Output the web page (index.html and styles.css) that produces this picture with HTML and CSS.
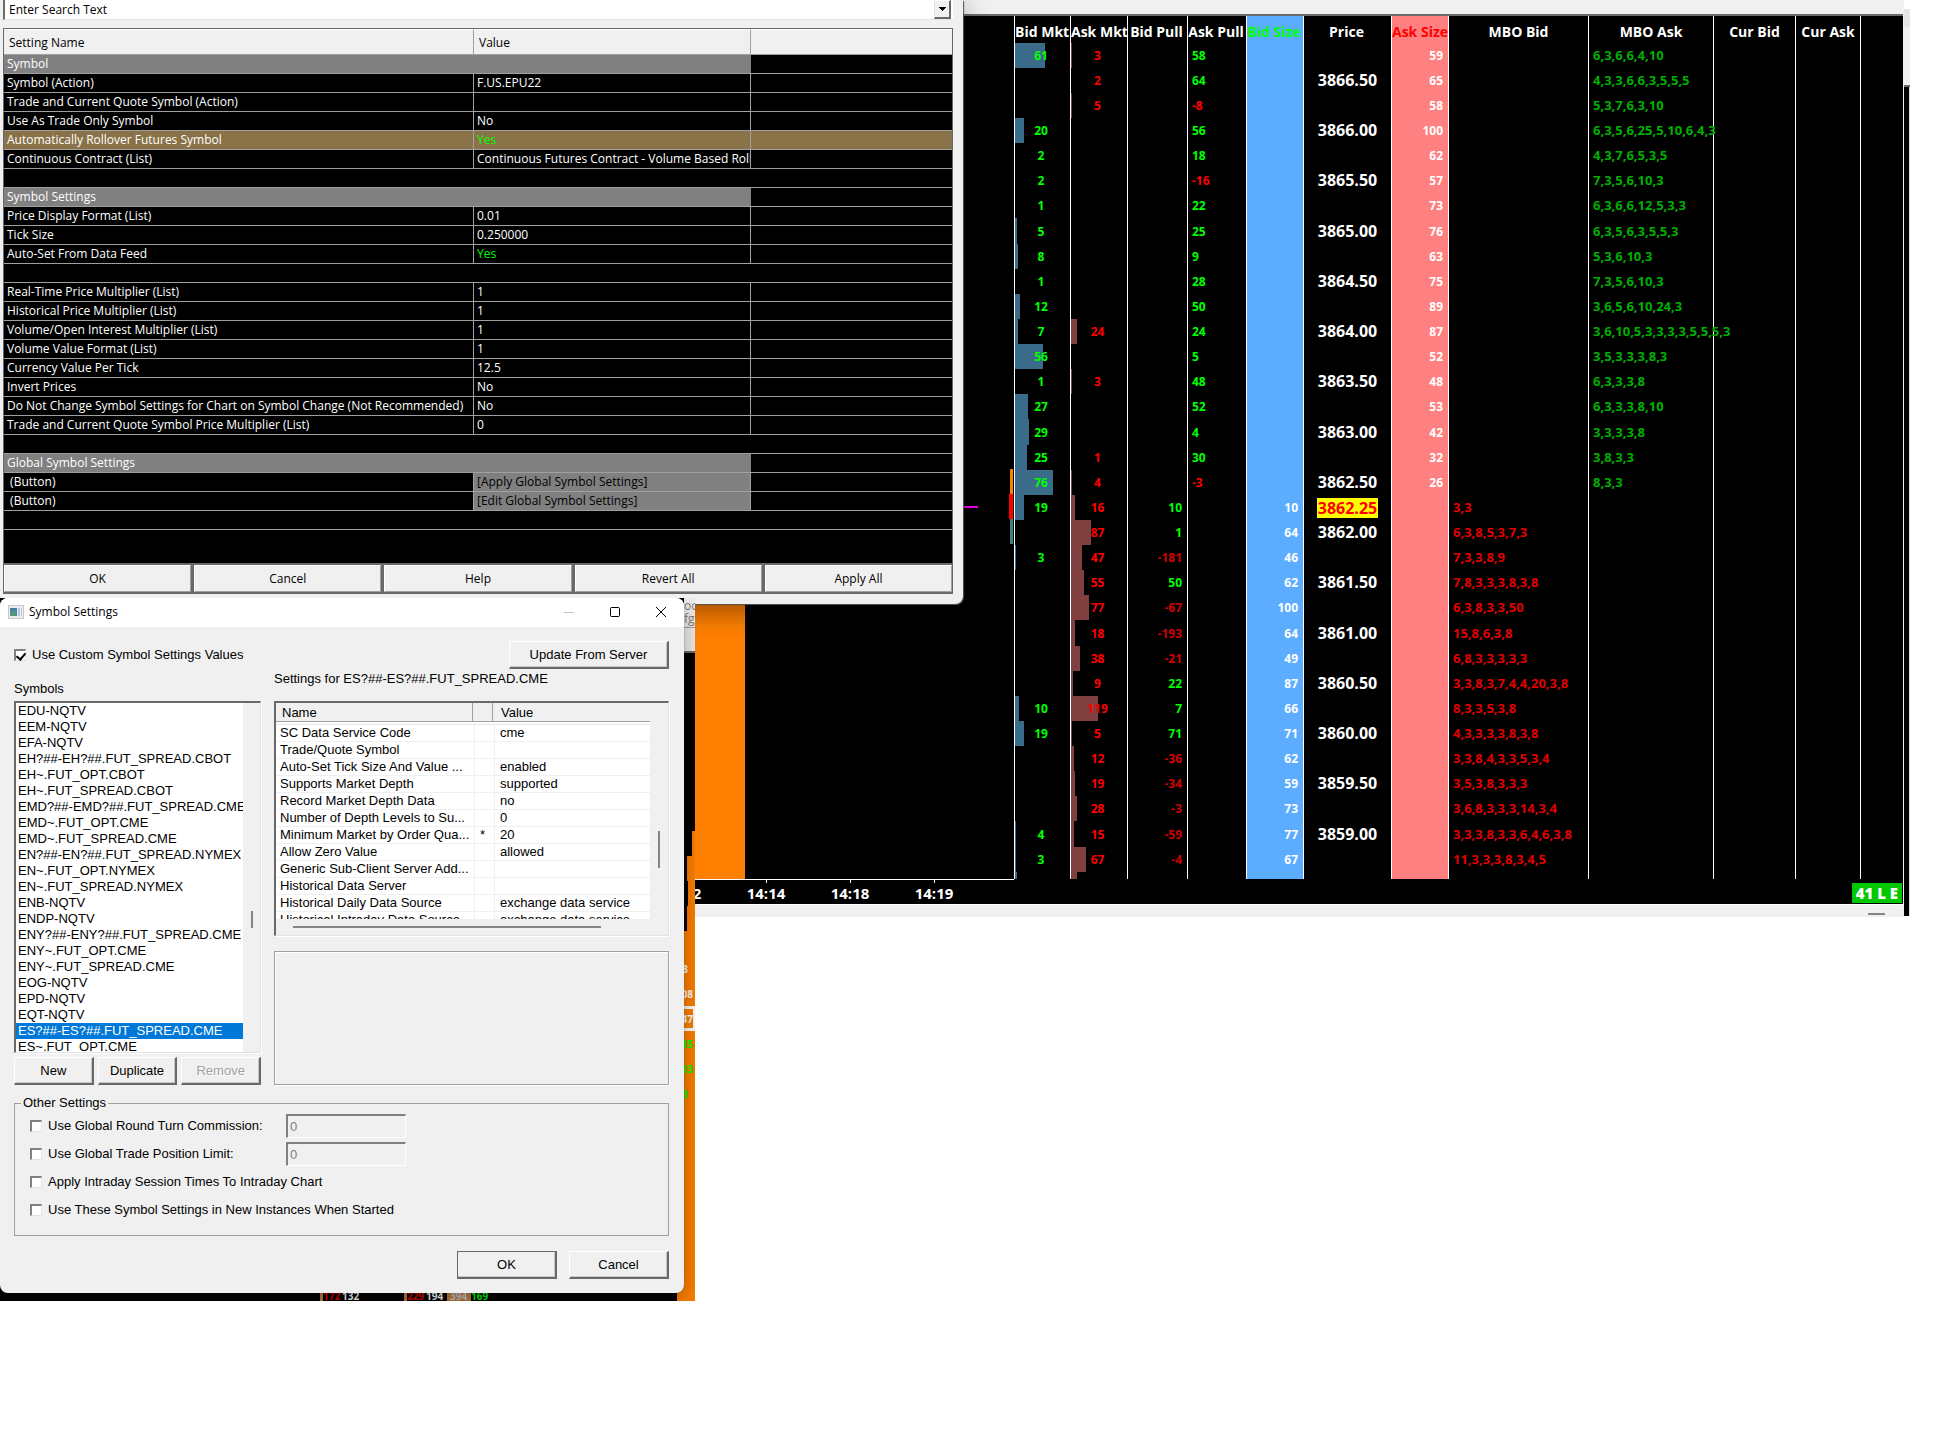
FILE: index.html
```html
<!DOCTYPE html>
<html lang="en">
<head>
<meta charset="utf-8">
<title>Symbol Settings</title>
<link rel="stylesheet" href="styles.css">
</head>
<body>
<main class="desktop">

<section class="chart-window" aria-label="Depth ladder">
  <div class="chart-top"></div>
  <div class="chart-body">
    <div class="plot">
      <div class="session-band"></div>
      <i class="mark last-price"></i>
      <i class="mark tick-up"></i>
      <i class="mark tick-now"></i>
      <i class="mark tick-down"></i>
    </div>
    <div class="ladder-pane">
    <table class="ladder">
      <colgroup><col class="c56"><col class="c57"><col class="c60"><col class="c59"><col class="c57"><col class="c88"><col class="c57"><col class="c140"><col class="c125"><col class="c82"><col class="c65"><col></colgroup>
      <thead><tr><th>Bid Mkt</th><th>Ask Mkt</th><th>Bid Pull</th><th>Ask Pull</th><th>Bid Size</th><th>Price</th><th>Ask Size</th><th>MBO Bid</th><th>MBO Ask</th><th>Cur Bid</th><th>Cur Ask</th><th></th></tr></thead>
      <tbody>
      <tr><td style="--bar:30px">61</td><td style="--bar:1px">3</td><td></td><td>58</td><td></td><td></td><td>59</td><td></td><td>6,3,6,6,4,10</td><td></td><td></td><td></td></tr>
      <tr><td></td><td>2</td><td></td><td>64</td><td></td><td>3866.50</td><td>65</td><td></td><td>4,3,3,6,6,3,5,5,5</td><td></td><td></td><td></td></tr>
      <tr><td></td><td style="--bar:1px">5</td><td></td><td class="neg">-8</td><td></td><td></td><td>58</td><td></td><td>5,3,7,6,3,10</td><td></td><td></td><td></td></tr>
      <tr><td style="--bar:9px">20</td><td></td><td></td><td>56</td><td></td><td>3866.00</td><td>100</td><td></td><td>6,3,5,6,25,5,10,6,4,3</td><td></td><td></td><td></td></tr>
      <tr><td>2</td><td></td><td></td><td>18</td><td></td><td></td><td>62</td><td></td><td>4,3,7,6,5,3,5</td><td></td><td></td><td></td></tr>
      <tr><td>2</td><td></td><td></td><td class="neg">-16</td><td></td><td>3865.50</td><td>57</td><td></td><td>7,3,5,6,10,3</td><td></td><td></td><td></td></tr>
      <tr><td>1</td><td></td><td></td><td>22</td><td></td><td></td><td>73</td><td></td><td>6,3,6,6,12,5,3,3</td><td></td><td></td><td></td></tr>
      <tr><td style="--bar:2px">5</td><td></td><td></td><td>25</td><td></td><td>3865.00</td><td>76</td><td></td><td>6,3,5,6,3,5,5,3</td><td></td><td></td><td></td></tr>
      <tr><td style="--bar:3px">8</td><td></td><td></td><td>9</td><td></td><td></td><td>63</td><td></td><td>5,3,6,10,3</td><td></td><td></td><td></td></tr>
      <tr><td>1</td><td></td><td></td><td>28</td><td></td><td>3864.50</td><td>75</td><td></td><td>7,3,5,6,10,3</td><td></td><td></td><td></td></tr>
      <tr><td style="--bar:5px">12</td><td></td><td></td><td>50</td><td></td><td></td><td>89</td><td></td><td>3,6,5,6,10,24,3</td><td></td><td></td><td></td></tr>
      <tr><td style="--bar:3px">7</td><td style="--bar:6px">24</td><td></td><td>24</td><td></td><td>3864.00</td><td>87</td><td></td><td>3,6,10,5,3,3,3,3,5,5,5,3</td><td></td><td></td><td></td></tr>
      <tr><td style="--bar:28px">56</td><td></td><td></td><td>5</td><td></td><td></td><td>52</td><td></td><td>3,5,3,3,3,8,3</td><td></td><td></td><td></td></tr>
      <tr><td>1</td><td style="--bar:1px">3</td><td></td><td>48</td><td></td><td>3863.50</td><td>48</td><td></td><td>6,3,3,3,8</td><td></td><td></td><td></td></tr>
      <tr><td style="--bar:13px">27</td><td></td><td></td><td>52</td><td></td><td></td><td>53</td><td></td><td>6,3,3,3,8,10</td><td></td><td></td><td></td></tr>
      <tr><td style="--bar:14px">29</td><td></td><td></td><td>4</td><td></td><td>3863.00</td><td>42</td><td></td><td>3,3,3,3,8</td><td></td><td></td><td></td></tr>
      <tr><td style="--bar:12px">25</td><td>1</td><td></td><td>30</td><td></td><td></td><td>32</td><td></td><td>3,8,3,3</td><td></td><td></td><td></td></tr>
      <tr><td style="--bar:38px">76</td><td style="--bar:1px">4</td><td></td><td class="neg">-3</td><td></td><td>3862.50</td><td>26</td><td></td><td>8,3,3</td><td></td><td></td><td></td></tr>
      <tr><td style="--bar:9px">19</td><td style="--bar:4px">16</td><td>10</td><td></td><td>10</td><td><mark>3862.25</mark></td><td></td><td>3,3</td><td></td><td></td><td></td><td></td></tr>
      <tr><td></td><td style="--bar:20px">87</td><td>1</td><td></td><td>64</td><td>3862.00</td><td></td><td>6,3,8,5,3,7,3</td><td></td><td></td><td></td><td></td></tr>
      <tr><td style="--bar:1px">3</td><td style="--bar:11px">47</td><td class="neg">-181</td><td></td><td>46</td><td></td><td></td><td>7,3,3,8,9</td><td></td><td></td><td></td><td></td></tr>
      <tr><td></td><td style="--bar:13px">55</td><td>50</td><td></td><td>62</td><td>3861.50</td><td></td><td>7,8,3,3,3,8,3,8</td><td></td><td></td><td></td><td></td></tr>
      <tr><td></td><td style="--bar:18px">77</td><td class="neg">-67</td><td></td><td>100</td><td></td><td></td><td>6,3,8,3,3,50</td><td></td><td></td><td></td><td></td></tr>
      <tr><td></td><td style="--bar:4px">18</td><td class="neg">-193</td><td></td><td>64</td><td>3861.00</td><td></td><td>15,8,6,3,8</td><td></td><td></td><td></td><td></td></tr>
      <tr><td></td><td style="--bar:9px">38</td><td class="neg">-21</td><td></td><td>49</td><td></td><td></td><td>6,8,3,3,3,3,3</td><td></td><td></td><td></td><td></td></tr>
      <tr><td></td><td style="--bar:2px">9</td><td>22</td><td></td><td>87</td><td>3860.50</td><td></td><td>3,3,8,3,7,4,4,20,3,8</td><td></td><td></td><td></td><td></td></tr>
      <tr><td style="--bar:4px">10</td><td style="--bar:27px">119</td><td>7</td><td></td><td>66</td><td></td><td></td><td>8,3,3,5,3,8</td><td></td><td></td><td></td><td></td></tr>
      <tr><td style="--bar:9px">19</td><td style="--bar:1px">5</td><td>71</td><td></td><td>71</td><td>3860.00</td><td></td><td>4,3,3,3,3,8,3,8</td><td></td><td></td><td></td><td></td></tr>
      <tr><td></td><td style="--bar:3px">12</td><td class="neg">-36</td><td></td><td>62</td><td></td><td></td><td>3,3,8,4,3,3,5,3,4</td><td></td><td></td><td></td><td></td></tr>
      <tr><td></td><td style="--bar:4px">19</td><td class="neg">-34</td><td></td><td>59</td><td>3859.50</td><td></td><td>3,5,3,8,3,3,3</td><td></td><td></td><td></td><td></td></tr>
      <tr><td></td><td style="--bar:6px">28</td><td class="neg">-3</td><td></td><td>73</td><td></td><td></td><td>3,6,8,3,3,3,14,3,4</td><td></td><td></td><td></td><td></td></tr>
      <tr><td style="--bar:1px">4</td><td style="--bar:3px">15</td><td class="neg">-59</td><td></td><td>77</td><td>3859.00</td><td></td><td>3,3,3,8,3,3,6,4,6,3,8</td><td></td><td></td><td></td><td></td></tr>
      <tr><td style="--bar:1px">3</td><td style="--bar:15px">67</td><td class="neg">-4</td><td></td><td>67</td><td></td><td></td><td>11,3,3,3,8,3,4,5</td><td></td><td></td><td></td><td></td></tr>
      <tr class="cut"><td style="--bar:2px"></td><td style="--bar:6px"></td><td></td><td></td><td></td><td></td><td></td><td></td><td></td><td></td><td></td><td></td></tr>
      </tbody>
    </table>
    </div>
  </div>
  <div class="time-axis">
    <span class="time first">14:12</span><span class="time">14:14</span><span class="time">14:18</span><span class="time">14:19</span>
    <strong class="position">41 L E</strong>
  </div>
  <div class="chart-scroll"><i></i></div>
</section>
<div class="chart-edge"><i class="edge-tab"></i><i class="edge-bar"></i><i class="edge-plot"></i></div>

<section class="dialog settings-dialog" aria-label="Chart settings">
  <div class="search">
    <input type="text" value="Enter Search Text" aria-label="Search">
    <button type="button" aria-label="Show search history"><svg width="7" height="4" viewBox="0 0 7 4"><path d="M0 0h7v1h-1v1h-1v1h-1v1h-1v-1h-1v-1h-1v-1h-1z"/></svg></button>
  </div>
  <div class="grid-frame">
    <table class="settings">
      <colgroup><col class="c470"><col class="c277"><col></colgroup>
      <thead><tr><th>Setting Name</th><th>Value</th><th></th></tr></thead>
      <tbody>
      <tr class="group"><td colspan="2">Symbol</td><td></td></tr>
      <tr><td>Symbol (Action)</td><td>F.US.EPU22</td><td></td></tr>
      <tr><td>Trade and Current Quote Symbol (Action)</td><td></td><td></td></tr>
      <tr><td>Use As Trade Only Symbol</td><td>No</td><td></td></tr>
      <tr class="current"><td>Automatically Rollover Futures Symbol</td><td class="yes">Yes</td><td></td></tr>
      <tr><td>Continuous Contract (List)</td><td>Continuous Futures Contract - Volume Based Rollover</td><td></td></tr>
      <tr><td colspan="3"></td></tr>
      <tr class="group"><td colspan="2">Symbol Settings</td><td></td></tr>
      <tr><td>Price Display Format (List)</td><td>0.01</td><td></td></tr>
      <tr><td>Tick Size</td><td>0.250000</td><td></td></tr>
      <tr><td>Auto-Set From Data Feed</td><td class="yes">Yes</td><td></td></tr>
      <tr><td colspan="3"></td></tr>
      <tr><td>Real-Time Price Multiplier (List)</td><td>1</td><td></td></tr>
      <tr><td>Historical Price Multiplier (List)</td><td>1</td><td></td></tr>
      <tr><td>Volume/Open Interest Multiplier (List)</td><td>1</td><td></td></tr>
      <tr><td>Volume Value Format (List)</td><td>1</td><td></td></tr>
      <tr><td>Currency Value Per Tick</td><td>12.5</td><td></td></tr>
      <tr><td>Invert Prices</td><td>No</td><td></td></tr>
      <tr><td>Do Not Change Symbol Settings for Chart on Symbol Change (Not Recommended)</td><td>No</td><td></td></tr>
      <tr><td>Trade and Current Quote Symbol Price Multiplier (List)</td><td>0</td><td></td></tr>
      <tr><td colspan="3"></td></tr>
      <tr class="group"><td colspan="2">Global Symbol Settings</td><td></td></tr>
      <tr><td>&nbsp;(Button)</td><td class="action"><button type="button">[Apply Global Symbol Settings]</button></td><td></td></tr>
      <tr><td>&nbsp;(Button)</td><td class="action"><button type="button">[Edit Global Symbol Settings]</button></td><td></td></tr>
      <tr><td colspan="3"></td></tr>
      </tbody>
    </table>
  </div>
  <div class="button-bar">
    <button type="button">OK</button><button type="button">Cancel</button><button type="button">Help</button><button type="button">Revert All</button><button type="button">Apply All</button>
  </div>
</section>

<div class="lower-area">
  <svg class="profile" width="18" height="703" viewBox="0 0 18 703"><path fill="#ff8000" d="M15 233h3v470H0V333h10v-25h1v-25h-1v-25h5z"/><path fill="#fff" d="M0 408h18v25H0z"/><path fill="#ff8000" d="M0 411h16v19H0z"/></svg>
  <div class="back-title"><span>oc</span><span>fg</span></div>
  <div class="volumes"><span>28</span><span>308</span><span>347</span><span class="up">345</span><span class="up">233</span><span class="up">28</span></div>
  <div class="prints"><span class="sell">172</span><span>132</span><span class="sell second">229</span><span>194</span><span class="peak">394</span><span class="buy">169</span></div>

  <section class="dialog symbol-dialog" aria-labelledby="symbol-title">
    <header class="title-bar">
      <svg class="app-icon" width="16" height="14" viewBox="0 0 16 14"><path fill="#c3c9cf" d="M0 0h16v14H0z"/><path fill="#eef1f4" d="M1 1h14v12H1z"/><path fill="#4b7fa5" d="M2 3h7v8H2z"/><path fill="#4f9a80" d="M4 6h4v5H2V8z"/><path fill="#b9c7d5" d="M10 3h2v8h-2zM13 3h1v8h-1z"/></svg>
      <h1 id="symbol-title">Symbol Settings</h1>
      <div class="window-buttons">
        <button type="button" aria-label="Minimize" disabled><svg width="10" height="10" viewBox="0 0 10 10"><path d="M0 5.5h10" stroke="#c4c4c4"/></svg></button>
        <button type="button" aria-label="Maximize"><svg width="10" height="10" viewBox="0 0 10 10"><rect x=".5" y=".5" width="9" height="9" rx="1" fill="none" stroke="#000"/></svg></button>
        <button type="button" aria-label="Close"><svg width="10" height="10" viewBox="0 0 10 10"><path d="M0 0l10 10M10 0L0 10" stroke="#000"/></svg></button>
      </div>
    </header>
    <div class="dialog-body">
      <div class="panes">
        <div class="left-pane">
          <label class="tick"><input type="checkbox" checked>Use Custom Symbol Settings Values</label>
          <label class="caption" for="symbols">Symbols</label>
          <div class="list-box">
            <select id="symbols" size="22">
              <option>EDU-NQTV</option><option>EEM-NQTV</option><option>EFA-NQTV</option>
              <option>EH?##-EH?##.FUT_SPREAD.CBOT</option><option>EH~.FUT_OPT.CBOT</option><option>EH~.FUT_SPREAD.CBOT</option>
              <option>EMD?##-EMD?##.FUT_SPREAD.CME</option><option>EMD~.FUT_OPT.CME</option><option>EMD~.FUT_SPREAD.CME</option>
              <option>EN?##-EN?##.FUT_SPREAD.NYMEX</option><option>EN~.FUT_OPT.NYMEX</option><option>EN~.FUT_SPREAD.NYMEX</option>
              <option>ENB-NQTV</option><option>ENDP-NQTV</option><option>ENY?##-ENY?##.FUT_SPREAD.CME</option>
              <option>ENY~.FUT_OPT.CME</option><option>ENY~.FUT_SPREAD.CME</option><option>EOG-NQTV</option>
              <option>EPD-NQTV</option><option>EQT-NQTV</option><option selected>ES?##-ES?##.FUT_SPREAD.CME</option><option>ES~.FUT_OPT.CME</option>
            </select>
            <div class="v-track"><i class="list-thumb"></i></div>
          </div>
          <div class="list-buttons">
            <button type="button" class="push">New</button><button type="button" class="push">Duplicate</button><button type="button" class="push" disabled>Remove</button>
          </div>
        </div>
        <div class="right-pane">
          <button type="button" class="push update">Update From Server</button>
          <p class="caption">Settings for ES?##-ES?##.FUT_SPREAD.CME</p>
          <div class="table-box">
            <div class="table-view">
              <table class="values">
                <colgroup><col class="c199"><col class="c20"><col></colgroup>
                <thead><tr><th>Name</th><th></th><th>Value</th></tr></thead>
                <tbody>
                <tr><td>SC Data Service Code</td><td></td><td>cme</td></tr>
                <tr><td>Trade/Quote Symbol</td><td></td><td></td></tr>
                <tr><td>Auto-Set Tick Size And Value ...</td><td></td><td>enabled</td></tr>
                <tr><td>Supports Market Depth</td><td></td><td>supported</td></tr>
                <tr><td>Record Market Depth Data</td><td></td><td>no</td></tr>
                <tr><td>Number of Depth Levels to Su...</td><td></td><td>0</td></tr>
                <tr><td>Minimum Market by Order Qua...</td><td>*</td><td>20</td></tr>
                <tr><td>Allow Zero Value</td><td></td><td>allowed</td></tr>
                <tr><td>Generic Sub-Client Server Add...</td><td></td><td></td></tr>
                <tr><td>Historical Data Server</td><td></td><td></td></tr>
                <tr><td>Historical Daily Data Source</td><td></td><td>exchange data service</td></tr>
                <tr><td>Historical Intraday Data Source</td><td></td><td>exchange data service</td></tr>
                </tbody>
              </table>
            </div>
            <div class="v-track"><i class="table-thumb"></i></div>
            <div class="h-track"><i></i></div>
          </div>
          <div class="notes"></div>
        </div>
      </div>
      <fieldset>
        <legend>Other Settings</legend>
        <div class="option"><label class="tick"><input type="checkbox">Use Global Round Turn Commission:</label><input type="text" value="0" disabled aria-label="Round turn commission"></div>
        <div class="option"><label class="tick"><input type="checkbox">Use Global Trade Position Limit:</label><input type="text" value="0" disabled aria-label="Trade position limit"></div>
        <div class="option"><label class="tick"><input type="checkbox">Apply Intraday Session Times To Intraday Chart</label></div>
        <div class="option"><label class="tick"><input type="checkbox">Use These Symbol Settings in New Instances When Started</label></div>
      </fieldset>
      <footer><button type="button" class="push default">OK</button><button type="button" class="push">Cancel</button></footer>
    </div>
  </section>
</div>

</main>
</body>
</html>
```

FILE: styles.css
```css
* { box-sizing: border-box; }
body { margin: 0; background: #fff; color: #000; font-family: "Open Sans", "Noto Sans", sans-serif; font-size: 12px; }
button, input, select { font: inherit; color: inherit; margin: 0; border-radius: 0; }
button { padding: 0; }
table { border-collapse: separate; border-spacing: 0; table-layout: fixed; width: 100%; }
th, td { padding: 0; white-space: nowrap; }
.desktop { position: relative; min-height: 100vh; overflow: hidden; }
.dialog { background: #f0f0f0; }

/* ---- chart with the depth ladder ---- */
.chart-window { position: absolute; top: 0; left: 695px; right: 38px; background: #000; border-right: 1px solid #f0f0f0; color: #fff; font-weight: 700; }
.chart-top { height: 16px; background: #f0f0f0; border-bottom: 2px solid #696969; }
.chart-body { display: flex; }
.plot { position: relative; width: 319px; flex: none; border-bottom: 1px solid #fff; }
.session-band { width: 50px; height: 100%; background: #ff8000; }
.mark { position: absolute; right: 1px; width: 3px; height: 25px; }
.mark.last-price { right: 36px; top: 490px; width: 20px; height: 2px; background: #f0f; }
.mark.tick-up { top: 453px; background: #ff8000; }
.mark.tick-now { top: 478px; width: 4px; background: #f00; }
.mark.tick-down { top: 503px; background: #408080; }
.ladder-pane { flex: 1; min-width: 0; padding-bottom: 1px; }
.c56 { width: 56px; } .c57 { width: 57px; } .c60 { width: 60px; } .c59 { width: 59px; }
.c88 { width: 88px; } .c140 { width: 140px; } .c125 { width: 125px; } .c82 { width: 82px; } .c65 { width: 65px; }
.ladder th { height: 27px; padding-top: 4px; line-height: 20px; font-size: 14px; text-align: center; border-left: 1px solid #fff; }
.ladder th:nth-child(-n + 7) { padding-right: 2px; }
.ladder td { height: 25px; line-height: 25px; font-size: 12px; border-left: 1px solid #fff; }
.ladder tbody tr:nth-child(8n + 8) td { height: 26px; }
.ladder tbody tr.cut td { height: 7px; line-height: 7px; }
.ladder td:nth-child(-n + 2) { text-align: center; color: #0f0; background: linear-gradient(#3a6c89, #3a6c89) 0 0 / var(--bar, 0) 100% no-repeat; padding-right: 3px; }
.ladder td:nth-child(2) { color: #f00; background-image: linear-gradient(#804040, #804040); }
.ladder td:nth-child(3) { text-align: right; padding-right: 5px; color: #0f0; }
.ladder td:nth-child(3).neg { color: #d00000; }
.ladder td:nth-child(4) { padding-left: 4px; color: #0f0; }
.ladder td:nth-child(4).neg { color: #f00; }
.ladder td:nth-child(5), .ladder th:nth-child(5) { background: #5cadff; }
.ladder th:nth-child(5) { color: #0f0; }
.ladder td:nth-child(5), .ladder td:nth-child(7) { text-align: right; padding-right: 5px; }
.ladder td:nth-child(6) { text-align: center; font-size: 16px; }
.ladder td:nth-child(7), .ladder th:nth-child(7) { background: #ff8080; }
.ladder th:nth-child(7) { color: #f00; }
.ladder td:nth-child(8) { padding-left: 4px; font-size: 13px; color: #e00000; }
.ladder td:nth-child(9) { padding-left: 4px; font-size: 13px; color: #00b000; }
.ladder mark { display: block; width: max-content; margin: 0 auto; line-height: 20px; padding: 0 1px; background: #ff0; color: #f00; }
.time-axis { display: flex; height: 24px; overflow: hidden; font-size: 15px; line-height: 20px; }
.time { width: 84px; text-align: center; padding-top: 3px; background: linear-gradient(#fff, #fff) 50% 0 / 1px 3px no-repeat; }
.time.first { margin-left: -55px; }
.position { height: 20px; margin: 3px 1px 0 auto; padding: 0 4px; background: #00c800; }
.chart-scroll { height: 13px; background: #f0f0f0; border-top: 1px solid #fff; padding: 8px 18px 0 0; }
.chart-scroll i { display: block; width: 17px; height: 2px; margin-left: auto; background: #858585; }
.chart-edge { position: absolute; top: 9px; right: 32px; width: 6px; height: 907px; display: flex; flex-direction: column; }
.edge-tab { height: 18px; background: #e5e5e5; }
.edge-bar { height: 60px; background: #f0f0f0; border-bottom: 2px solid #696969; }
.edge-plot { flex: 1; background: #000; border-right: 1px solid #ddd; }

/* ---- chart settings dialog ---- */
.settings-dialog { position: absolute; top: 0; left: 0; width: 963px; padding: 0 10px 10px 3px; border-radius: 0 0 8px 8px; box-shadow: 1px 1px 1px #555, 0 8px 28px rgba(0, 0, 0, .4); }
.search { display: flex; height: 20px; margin-bottom: 8px; background: #fff; border-left: 2px solid #696969; border-bottom: 1px solid #e3e3e3; }
.search input { flex: 1; min-width: 0; border: 0; padding: 0 4px; line-height: 18px; background: none; }
.search button { width: 17px; height: 19px; background: #f0f0f0; border: 1px solid; border-width: 1px 2px 2px 1px; border-color: #fff #696969 #696969 #e3e3e3; margin-right: 2px; display: grid; place-items: center; }
.grid-frame { border: 1px solid #696969; border-bottom: 0; background: #000; padding-bottom: 33px; color: #fff; }
.c470 { width: 470px; } .c277 { width: 277px; }
.settings th { height: 26px; padding: 0 5px; text-align: left; font-weight: 400; background: #f0f0f0; color: #000; border-top: 1px solid #fff; border-right: 1px solid #a0a0a0; border-bottom: 1px solid #a0a0a0; }
.settings td { height: 19px; line-height: 18px; padding: 0 3px; border-right: 1px solid #a0a0a0; border-bottom: 1px solid #a0a0a0; }
.settings td:nth-child(2) { overflow: hidden; padding-right: 0; }
.settings th:last-child, .settings td:last-child, .settings .group td { border-right: 0; }
.settings .group td:first-child, .settings .action { background: #808080; }
.settings .current td { background: #8a7248; }
.settings .yes { color: #0f0; }
.settings button { display: block; border: 0; background: none; color: #000; line-height: 18px; }
.button-bar { display: flex; gap: 3px; padding: 2px 1px; background: #696969; }
.button-bar button { flex: 1; height: 27px; background: #f0f0f0; border: 1px solid; border-color: #fff #a0a0a0 #a0a0a0 #fff; }

/* ---- lower screen area with the symbol settings dialog ---- */
.lower-area { position: absolute; top: 598px; left: 0; width: 695px; height: 703px; overflow: hidden; background: #000; }
.profile { position: absolute; right: 0; top: 0; }
.back-title { position: absolute; top: 0; right: 0; width: 11px; height: 55px; background: #f0f0f0; border-bottom: 2px solid #696969; color: #808080; line-height: 13px; padding-top: 1px; }
.back-title span { display: block; }
.back-title span:last-child { padding-bottom: 2px; border-bottom: 1px solid #a0a0a0; }
.volumes { position: absolute; top: 359px; right: 2px; display: grid; grid-auto-rows: 25px; line-height: 25px; font-size: 10px; font-weight: 700; color: #fff; text-align: right; }
.volumes span:first-child, .volumes span:last-child { padding-right: 5px; }
.volumes .up { color: #0f0; }
.prints { position: absolute; left: 320px; bottom: -1px; display: flex; gap: 3px; height: 12px; line-height: 12px; font-size: 10px; font-weight: 700; color: #fff; }
.prints span { width: 20px; }
.prints .sell { width: 19px; border-left: 3px solid #c08040; color: #e00000; }
.prints .second { margin-left: 39px; }
.prints .peak { width: 24px; padding-left: 3px; margin: 0 -3px 0 -2px; background: #c08040; color: #ccc; }
.prints .buy { color: #0f0; }

.symbol-dialog { position: absolute; inset: 0 11px auto 0; border-radius: 8px; overflow: hidden; font-family: "Liberation Sans", Arial, sans-serif; font-size: 13px; line-height: 16px; box-shadow: 0 0 1px #333, 0 8px 24px rgba(0, 0, 0, .35); }
.title-bar { display: flex; align-items: center; height: 29px; padding: 0 18px 2px 8px; background: #fff; font-family: "Open Sans", "Noto Sans", sans-serif; font-size: 12px; }
.title-bar h1 { margin: 0 auto 0 5px; font-size: 12px; font-weight: 400; }
.window-buttons { display: flex; gap: 36px; }
.window-buttons button { border: 0; background: none; width: 10px; height: 10px; line-height: 0; }
.dialog-body { padding: 14px 15px 14px 14px; }
.panes { display: flex; gap: 13px; }
.left-pane { width: 247px; }
.right-pane { flex: 1; display: flex; flex-direction: column; min-width: 0; }
.tick { display: flex; align-items: center; gap: 6px; height: 28px; padding-bottom: 1px; white-space: nowrap; }
.tick input { appearance: none; flex: none; position: relative; width: 12px; height: 12px; background: #fff; border: 1px solid; border-width: 2px 1px 1px 2px; border-color: #808080 #e3e3e3 #e3e3e3 #808080; }
.tick input:checked::after { content: ""; position: absolute; left: 2px; top: 0; width: 4px; height: 7px; border: solid #000; border-width: 0 2px 2px 0; transform: rotate(40deg); }
.left-pane .caption { display: block; height: 16px; margin: 12px 0 4px; }
.right-pane .caption { height: 16px; margin: 2px 0 14px; }
.list-box, .table-box { border: 2px solid; border-width: 2px 1px 1px 2px; border-color: #696969 #e3e3e3 #e3e3e3 #696969; box-shadow: 1px 1px #fff; }
.list-box { display: flex; height: 352px; }
.list-box select { flex: 1; min-width: 0; height: 349px; border: 0; padding: 0; background: #fff; overflow: hidden; scrollbar-width: none; outline: 0; }
.list-box option { height: 16px; min-height: 16px; line-height: 16px; padding: 0 2px; }
.list-box option:checked { background: #0078d7 linear-gradient(#0078d7, #0078d7); color: #fff; }
.v-track { width: 17px; }
.v-track i { display: block; width: 2px; margin: 0 auto; background: #858585; }
.v-track .list-thumb { height: 17px; margin-top: 208px; }
.v-track .table-thumb { height: 37px; margin-top: 128px; }
.list-buttons { display: flex; gap: 4px; margin-top: 4px; }
.list-buttons .push { flex: 1; }
.push { height: 28px; background: #f0f0f0; border: 1px solid; border-width: 1px 2px 2px 1px; border-color: #fff #696969 #696969 #fff; box-shadow: inset -1px -1px #c8c8c8; }
.push:disabled { color: #a0a0a0; text-shadow: 1px 1px #fff; }
.push.default { border-color: #696969; }
.update { width: 160px; align-self: flex-end; }
.table-box { display: grid; grid-template-columns: 1fr 18px; grid-template-rows: 216px 16px; height: 235px; }
.table-view { overflow: hidden; background: #fff; }
.c199 { width: 199px; } .c20 { width: 20px; }
.values thead { background: linear-gradient(#f0f0f0 18px, #a0a0a0 18px 19px, #fff 19px); }
.values th { height: 22px; line-height: 20px; padding-left: 6px; vertical-align: top; text-align: left; font-weight: 400; border-bottom: 1px solid #e8e8e8; background: linear-gradient(#a0a0a0, #a0a0a0) calc(100% - 2px) 0 / 1px 18px no-repeat; }
.values th:last-child { background: none; }
.values td { height: 17px; line-height: 16px; padding-left: 4px; border-right: 1px solid #f0f0f0; border-bottom: 1px solid #f0f0f0; }
.values td:nth-child(2) { padding-left: 5px; }
.values td:last-child { padding-left: 5px; border-right: 0; }
.h-track { grid-column: 1 / 3; padding: 7px 67px 0 17px; }
.h-track i { display: block; height: 2px; background: #858585; }
.notes { height: 134px; margin-top: 15px; border: 1px solid #a0a0a0; box-shadow: inset 1px 1px #fff, 1px 1px #fff; }
fieldset { margin: 10px 0 0; padding: 1px 6px 11px; border: 1px solid #a0a0a0; min-width: 0; }
legend { padding: 0 2px; height: 16px; }
.option { display: grid; grid-template-columns: 256px 120px; align-items: center; height: 28px; margin-left: 9px; }
.option input[type="text"] { height: 24px; padding: 0 2px; color: #808080; background: #f0f0f0; border: 1px solid; border-width: 2px 1px 1px 2px; border-color: #808080 #fff #fff #808080; }
footer { display: flex; justify-content: flex-end; gap: 12px; margin-top: 15px; }
footer .push { width: 100px; }
```
